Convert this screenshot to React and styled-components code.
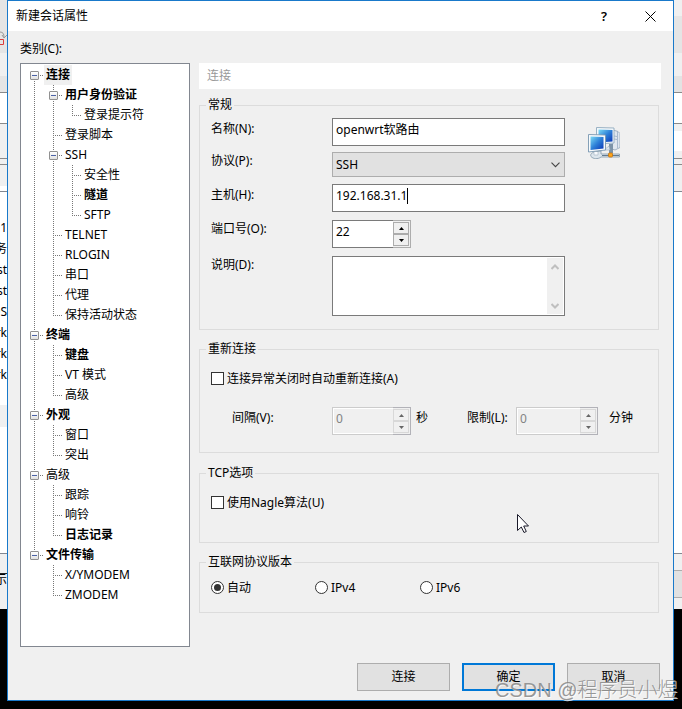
import React from 'react'
import styled, { createGlobalStyle, css } from 'styled-components';

const GlobalStyle = createGlobalStyle`
* {
  box-sizing: border-box;
}
body {
  margin: 0;
  background: #000;
  overflow: hidden;
}
`

const Screen = styled.div`
position: relative;
display: flex;
align-items: flex-start;
width: 682px;
height: 709px;
overflow: hidden;
background: #000;
color: #000;
font-family: "Noto Sans", "Noto Sans CJK SC", sans-serif;
font-size: 12px;
line-height: 16px;
white-space: nowrap;
`

const Strip = styled.div`
flex: none;
width: ${(p) => p.$width}px;
overflow: hidden;
`
const Band = styled.div`
display: flex;
flex-direction: column;
align-items: flex-end;
height: ${(p) => p.$h}px;
padding-top: ${(p) => p.$pad || 0}px;
background: ${(p) => p.$bg};
`
const Scrap = styled.span`
height: 21px;
line-height: 21px;
`

const Dialog = styled.div`
flex: none;
width: 667px;
height: 701px;
border: 1px solid #1979ca;
background: #f0f0f0;
`
const TitleBar = styled.div`
display: flex;
align-items: center;
height: 30px;
padding: 0 17px 0 8px;
background: #fff;
`
const Title = styled.span`
flex: 1;
`
const Help = styled.span`
width: 8px;
margin-right: 36px;
font-size: 13px;
font-weight: 600;
`
const TreeLabel = styled.div`
height: 32px;
padding: 10px 0 0 12px;
`
const Body = styled.div`
display: flex;
padding-left: 12px;
`

const Tree = styled.div`
width: 170px;
height: 584px;
padding: 1px 0 0 4px;
border: 1px solid #828790;
background: #fff;
`
const TreeRow = styled.div`
display: flex;
height: 20px;
`
const dots = (dir) => `repeating-linear-gradient(${dir}, #777 0 1px, transparent 1px 2px)`
const Guide = styled.span`
display: flex;
flex: none;
width: 19px;
height: 20px;
padding: 6px 0 0 5px;
background-repeat: no-repeat;
${(p) => p.$type === 'line' && css`
background-image: ${dots('to bottom')};
background-position: 9px 0;
background-size: 1px 20px;
`}
${(p) => p.$type === 'tee' && css`
background-image: ${dots('to bottom')}, ${dots('to right')};
background-position: 9px 0, 9px 10px;
background-size: 1px 20px, 10px 1px;
`}
${(p) => p.$type === 'end' && css`
background-image: ${dots('to bottom')}, ${dots('to right')};
background-position: 9px 0, 9px 10px;
background-size: 1px 11px, 10px 1px;
`}
${(p) => p.$type === 'first' && css`
background-image: ${dots('to bottom')}, ${dots('to right')};
background-position: 9px 10px, 9px 10px;
background-size: 1px 10px, 10px 1px;
`}
`
const Expander = styled.span`
display: flex;
align-items: center;
justify-content: center;
width: 9px;
height: 9px;
border: 1px solid #919191;
border-radius: 1px;
background: linear-gradient(#fff, #e2e2e2);
&::after {
  content: '';
  width: 5px;
  height: 1px;
  background: #4b63a7;
}
`
const NodeText = styled.span`
height: 20px;
padding: 0 2px;
line-height: 19px;
font-weight: ${(p) => (p.$bold ? 700 : 400)};
background: ${(p) => (p.$selected ? '#f0f0f0' : 'transparent')};
`

const Panel = styled.div`
width: 462px;
margin-left: 9px;
`
const PanelTitle = styled.div`
height: 26px;
margin-bottom: 16px;
padding: 5px 8px;
background: #fff;
color: #999;
`
const Group = styled.div`
width: 460px;
height: ${(p) => p.$height}px;
margin-bottom: ${(p) => p.$gap || 0}px;
border: 1px solid #dcdcdc;
`
const Legend = styled.div`
width: fit-content;
height: 16px;
margin: -9px 0 0 6px;
padding: 0 2px;
background: #f0f0f0;
`
const GeneralBody = styled.div`
display: flex;
padding: 5px 0 0 11px;
`
const Fields = styled.div`
width: 354px;
`
const Field = styled.div`
display: flex;
margin-bottom: ${(p) => p.$gap}px;
`
const Label = styled.span`
width: 121px;
padding-top: ${(p) => p.$top}px;
`
const TextBox = styled.div`
display: flex;
width: 233px;
height: 28px;
padding: 3px;
border: 1px solid #7a7a7a;
background: #fff;
`
const Caret = styled.span`
width: 1px;
height: 16px;
background: #000;
`
const Combo = styled.div`
display: flex;
align-items: center;
justify-content: space-between;
width: 233px;
height: 25px;
padding: 0 4px 0 3px;
border: 1px solid #adadad;
background: #e1e1e1;
`
const TextArea = styled.div`
display: flex;
justify-content: flex-end;
width: 233px;
height: 60px;
padding: 1px;
border: 1px solid #7a7a7a;
background: #fff;
`
const ScrollBar = styled.div`
display: flex;
flex-direction: column;
align-items: center;
justify-content: space-between;
width: 16px;
padding: 6px 0 5px;
background: #f0f0f0;
`
const NetworkIcon = styled.svg`
margin: 9px 0 0 23px;
`

const SpinBox = styled.div`
display: flex;
width: ${(p) => p.$width || 79}px;
height: 28px;
`
const SpinValue = styled.span`
flex: 1;
padding: 3px;
border: 1px solid ${(p) => (p.$disabled ? '#cccccc' : '#7a7a7a')};
border-right: 0;
background: ${(p) => (p.$disabled ? '#f0f0f0' : '#fff')};
box-shadow: ${(p) => (p.$disabled ? 'inset 1px 1px #fff, inset 0 -1px #fff' : 'none')};
color: ${(p) => (p.$disabled ? '#838383' : '#000')};
`
const SpinButtons = styled.span`
display: flex;
flex-direction: column;
width: 18px;
padding: 1px 1px 1px 0;
border: 1px solid ${(p) => (p.$disabled ? '#b2b2b8' : '#adadad')};
border-left: 0;
background: #f0f0f0;
`
const SpinButton = styled.span`
display: flex;
align-items: center;
justify-content: center;
width: 16px;
height: 12px;
border: 1px solid ${(p) => (p.$disabled ? '#d8d8d8' : '#acacac')};
background: #f0f0f0;
`

const OptionRow = styled.div`
display: flex;
margin: ${(p) => p.$top}px 0 0 11px;
`
const Option = styled.div`
display: flex;
align-items: center;
width: ${(p) => (p.$width ? p.$width + 'px' : 'auto')};
height: 15px;
gap: 3px;
line-height: 15px;
`
const CheckBox = styled.span`
width: 13px;
height: 13px;
border: 1px solid #333;
background: #fff;
`
const RadioDot = styled.span`
display: flex;
align-items: center;
justify-content: center;
width: 13px;
height: 13px;
border: 1px solid #333;
border-radius: 50%;
background: #fff;
&::after {
  content: '';
  width: 7px;
  height: 7px;
  border-radius: 50%;
  background: ${(p) => (p.$checked ? '#333' : 'transparent')};
}
`
const TimerRow = styled.div`
display: flex;
margin: 21px 0 0 32px;
`
const TimerText = styled.span`
width: ${(p) => p.$width}px;
padding: 3px 0 0 ${(p) => p.$left || 0}px;
`

const Buttons = styled.div`
display: flex;
justify-content: flex-end;
gap: 12px;
margin-top: 16px;
padding-right: 13px;
`
const Button = styled.div`
width: 93px;
height: 28px;
border: ${(p) => (p.$primary ? '2px solid #0078d7' : '1px solid #adadad')};
background: #e1e1e1;
line-height: ${(p) => (p.$primary ? 24 : 26)}px;
text-align: center;
`

const Pointer = styled.svg`
position: absolute;
left: 517px;
top: 514px;
`
const Watermark = styled.div`
position: absolute;
left: 495px;
top: 678px;
color: rgba(135, 135, 135, 0.85);
font-family: "Liberation Sans", "Noto Sans CJK SC", sans-serif;
font-size: 20px;
font-weight: 300;
line-height: 24px;
text-shadow: 1px 1px 0 rgba(255, 255, 255, 0.75);
`

const tree = [
    {
        text: '连接', bold: true, selected: true, children: [
            { text: '用户身份验证', bold: true, children: [{ text: '登录提示符' }] },
            { text: '登录脚本' },
            { text: 'SSH', children: [{ text: '安全性' }, { text: '隧道', bold: true }, { text: 'SFTP' }] },
            { text: 'TELNET' },
            { text: 'RLOGIN' },
            { text: '串口' },
            { text: '代理' },
            { text: '保持活动状态' },
        ]
    },
    { text: '终端', bold: true, children: [{ text: '键盘', bold: true }, { text: 'VT 模式' }, { text: '高级' }] },
    { text: '外观', bold: true, children: [{ text: '窗口' }, { text: '突出' }] },
    { text: '高级', children: [{ text: '跟踪' }, { text: '响铃' }, { text: '日志记录', bold: true }] },
    { text: '文件传输', bold: true, children: [{ text: 'X/YMODEM' }, { text: 'ZMODEM' }] },
]

// '' keeps the indent where an ancestor has no more siblings
const TreeNodes = ({ nodes, parents = [] }) => nodes.map((node, i) => {
    const last = i === nodes.length - 1
    const top = parents.length === 0 && i === 0
    return (
        <React.Fragment key={node.text}>
            <TreeRow>
                {parents.map((type, n) => <Guide key={n} $type={type} />)}
                <Guide $type={top ? 'first' : last ? 'end' : 'tee'}>
                    {node.children && <Expander />}
                </Guide>
                <NodeText $bold={node.bold} $selected={node.selected}>{node.text}</NodeText>
            </TreeRow>
            {node.children && <TreeNodes nodes={node.children} parents={[...parents, last ? '' : 'line']} />}
        </React.Fragment>
    )
})

const Spinner = ({ value, width, disabled }) => (
    <SpinBox $width={width}>
        <SpinValue $disabled={disabled}>{value}</SpinValue>
        <SpinButtons $disabled={disabled}>
            {['M0 3h5L2.5 0z', 'M0 0h5L2.5 3z'].map((d) => (
                <SpinButton key={d} $disabled={disabled}>
                    <svg width="5" height="3"><path d={d} fill={disabled ? '#666' : '#000'} /></svg>
                </SpinButton>
            ))}
        </SpinButtons>
    </SpinBox>
)

const Network = () => (
    <NetworkIcon width="32" height="32" viewBox="0 0 32 32">
        <defs>
            <linearGradient id="glass" x1="0" y1="0" x2="1" y2="1">
                <stop offset="0" stopColor="#7ddcf5" />
                <stop offset=".5" stopColor="#2d80d8" />
                <stop offset="1" stopColor="#0a35b4" />
            </linearGradient>
        </defs>
        <path d="M25 3l5 1.5 2 2v14L27 23l-3-1z" fill="#dfe6ef" stroke="#8fa3b8" strokeWidth=".8" />
        <path d="M29.5 5v16M26 9l3 .5M26 12l3 .5" stroke="#a9bace" />
        <path d="M8.500.5l17.500.5v15l-17.500 1z" fill="#f4f8fb" stroke="#8fa9bd" strokeWidth=".9" />
        <path d="M10.500 2.500l14 .5v11.500l-14 1z" fill="url(#glass)" />
        <path d="M21 17h4v9h-4z" fill="#7c93a8" />
        <path d="M16 23l5-4 1 4z" fill="#dfe6ef" stroke="#9badbd" strokeWidth=".6" />
        <path d="M.5 7.500l17 .5v15l-17 2z" fill="#f7fafc" stroke="#7896b0" strokeWidth=".9" />
        <path d="M2.500 9.500l13 .5v11.500l-13 1.500z" fill="url(#glass)" />
        <path d="M6 25l7-1v3h18.500v3H13c-3 2.500-8 2-10-.500-1-2 .5-3.500 3-4.500z" fill="#dce5ec" stroke="#8298aa" strokeWidth=".8" />
        <path d="M14 28.500h17" stroke="#647b91" />
        <path d="M6 25v3h4v-3" fill="#f8fafc" stroke="#a3b4c3" strokeWidth=".6" />
        <rect x="20.500" y="26" width="4" height="4" rx="1" fill="#ffa51c" stroke="#c27513" strokeWidth=".8" />
    </NetworkIcon>
)

const leftBands = [
    [53, '#e5e5e5'], [23, '#f0f0f0'], [16, '#e5e5e5'], [1, '#8a8a8a'], [30, '#fff'], [1, '#8a8a8a'],
    [34, '#f0f0f0'], [1, '#8a8a8a'], [5, '#f0f0f0'], [1, '#8a8a8a'], [21, '#f0f0f0'], [5, '#fff'], [1, '#828790'],
]
const rightBands = [
    [16, '#f0f0f0'], [37, '#e5e5e5'], [23, '#f0f0f0'], [16, '#e3e3e3'], [1, '#8a8a8a'], [30, '#fff'], [1, '#8a8a8a'],
    [7, '#f0f0f0'], [20, '#fff'], [7, '#f0f0f0'], [1, '#8a8a8a'], [5, '#f0f0f0'], [1, '#8a8a8a'], [20, '#f0f0f0'],
    [6, '#f0f0f0'], [1, '#828790'], [361, '#fff'], [1, '#828790'], [16, '#f0f0f0'], [1, '#adadad'], [26, '#e1e1e1'],
    [1, '#adadad'], [11, '#f0f0f0'],
]

const LeftStrip = () => (
    <Strip $width={7}>
        <svg width="7" height="53" style={{ display: 'block', background: '#e5e5e5' }}>
            <path d="M0 32c3 0 4 2 4 5M2 35l2 3 3-3" fill="none" stroke="#999" />
            <path d="M0 39.500h3.500v5H0" fill="none" stroke="#dc3c3c" />
        </svg>
        {leftBands.slice(1).map(([h, bg], i) => <Band key={i} $h={h} $bg={bg} />)}
        <Band $h={213} $bg="#fff" $pad={25}>
            {['3.1', '服务', 'ost', 'ost', 'OS', 'ork', 'ork', 'ork'].map((text, i) => <Scrap key={i}>{text}</Scrap>)}
        </Band>
        <Band $h={22} $bg="#f0f0f0" />
        <Band $h={126} $bg="#fff" />
        <Band $h={1} $bg="#828790" />
        <Band $h={19} $bg="#f0f0f0" />
        <Band $h={1} $bg="#222" />
        <Band $h={35} $bg="#f0f0f0"><Scrap as="div" style={{ height: 12, lineHeight: '12px' }}>示</Scrap></Band>
    </Strip>
)

const App = () => {
    return (
        <Screen>
            <GlobalStyle />
            <LeftStrip />
            <Dialog>
                <TitleBar>
                    <Title>新建会话属性</Title>
                    <Help>?</Help>
                    <svg width="11" height="11"><path d="M.5.5l10 10M10.500.5l-10 10" stroke="#000" /></svg>
                </TitleBar>
                <TreeLabel>类别(C):</TreeLabel>
                <Body>
                    <Tree>
                        <TreeNodes nodes={tree} />
                    </Tree>
                    <Panel>
                        <PanelTitle>连接</PanelTitle>
                        <Group $height={225} $gap={19}>
                            <Legend>常规</Legend>
                            <GeneralBody>
                                <Fields>
                                    <Field $gap={6}>
                                        <Label $top={3}>名称(N):</Label>
                                        <TextBox>openwrt软路由</TextBox>
                                    </Field>
                                    <Field $gap={7}>
                                        <Label $top={1}>协议(P):</Label>
                                        <Combo>
                                            SSH
                                            <svg width="9" height="6"><path d="M.5.7l4 4 4-4" fill="none" stroke="#444" strokeWidth="1.1" /></svg>
                                        </Combo>
                                    </Field>
                                    <Field $gap={8}>
                                        <Label $top={3}>主机(H):</Label>
                                        <TextBox>192.168.31.1<Caret /></TextBox>
                                    </Field>
                                    <Field $gap={8}>
                                        <Label $top={1}>端口号(O):</Label>
                                        <Spinner value="22" />
                                    </Field>
                                    <Field $gap={0}>
                                        <Label $top={1}>说明(D):</Label>
                                        <TextArea>
                                            <ScrollBar>
                                                <svg width="8" height="6"><path d="M.5 5L4 1.500 7.500 5" fill="none" stroke="#bfbfbf" strokeWidth="2" /></svg>
                                                <svg width="8" height="6"><path d="M.5 1L4 4.500 7.500 1" fill="none" stroke="#bfbfbf" strokeWidth="2" /></svg>
                                            </ScrollBar>
                                        </TextArea>
                                    </Field>
                                </Fields>
                                <Network />
                            </GeneralBody>
                        </Group>
                        <Group $height={104} $gap={20}>
                            <Legend>重新连接</Legend>
                            <OptionRow $top={14}>
                                <Option><CheckBox />连接异常关闭时自动重新连接(A)</Option>
                            </OptionRow>
                            <TimerRow>
                                <TimerText $width={100}>间隔(V):</TimerText>
                                <Spinner value="0" disabled />
                                <TimerText $width={56} $left={5}>秒</TimerText>
                                <TimerText $width={49}>限制(L):</TimerText>
                                <Spinner value="0" width={82} disabled />
                                <TimerText $left={11}>分钟</TimerText>
                            </TimerRow>
                        </Group>
                        <Group $height={70} $gap={19}>
                            <Legend>TCP选项</Legend>
                            <OptionRow $top={14}>
                                <Option><CheckBox />使用Nagle算法(U)</Option>
                            </OptionRow>
                        </Group>
                        <Group $height={51}>
                            <Legend>互联网协议版本</Legend>
                            <OptionRow $top={10}>
                                <Option $width={104}><RadioDot $checked />自动</Option>
                                <Option $width={105}><RadioDot />IPv4</Option>
                                <Option><RadioDot />IPv6</Option>
                            </OptionRow>
                        </Group>
                    </Panel>
                </Body>
                <Buttons>
                    <Button>连接</Button>
                    <Button $primary>确定</Button>
                    <Button>取消</Button>
                </Buttons>
            </Dialog>
            <Strip $width={8}>
                {rightBands.map(([h, bg], i) => <Band key={i} $h={h} $bg={bg} />)}
            </Strip>
            <Pointer width="12" height="20">
                <path d="M.5.5v16l3.800-3.500 2.700 5.500 2.300-1-2.600-5.500h4.800z" fill="#fff" stroke="#1a1a2a" />
            </Pointer>
            <Watermark>CSDN @程序员小煜</Watermark>
        </Screen>
    )
}

export default App
